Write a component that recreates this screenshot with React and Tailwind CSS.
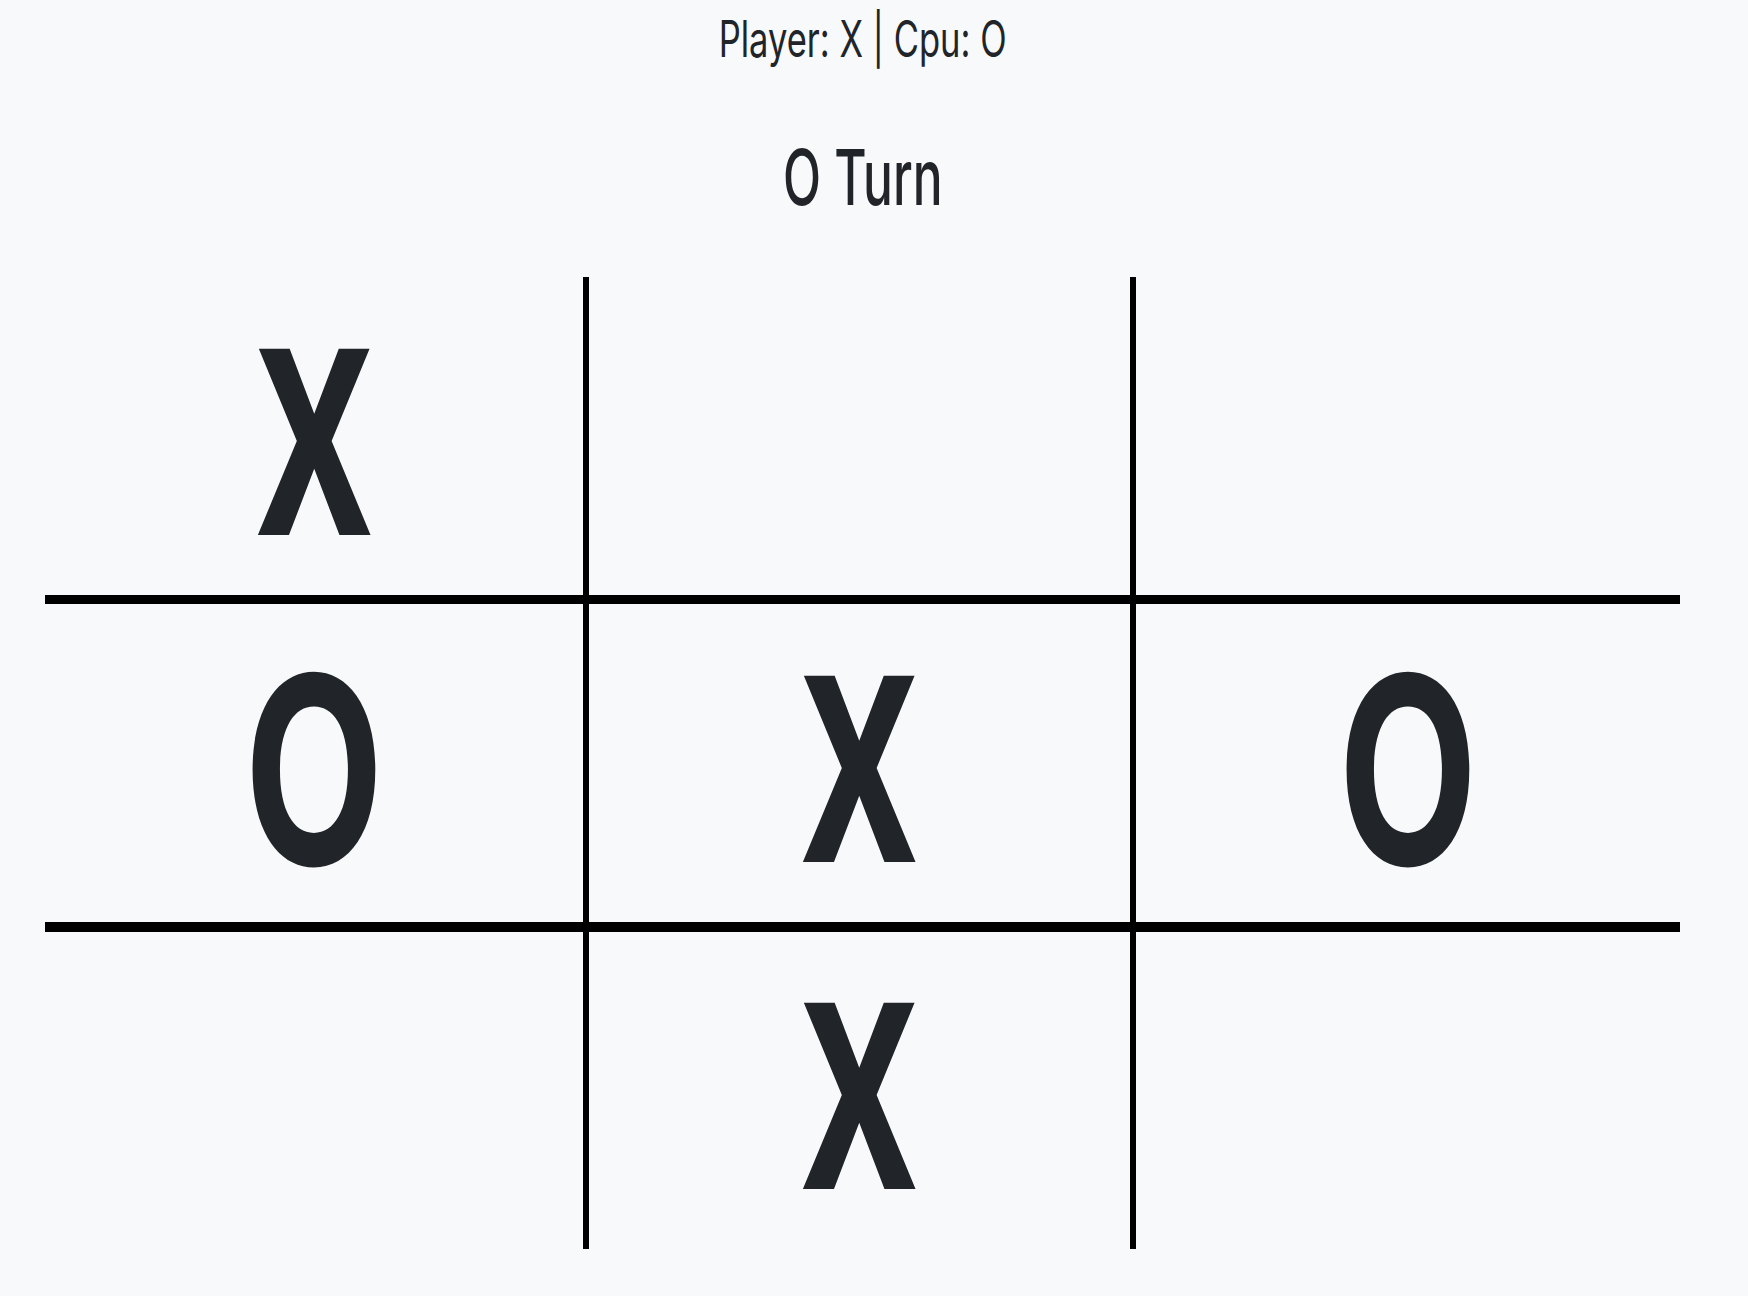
import React from 'react';

const board = ['X', '', '', 'O', 'X', 'O', '', 'X', ''];

// border classes per cell: middle column carries the vertical lines, middle row the horizontal ones
const cellBorders = [
  '',
  'border-x-[6px] border-black',
  '',
  'border-t-[9px] border-b-[10px] border-black',
  'border-x-[6px] border-t-[9px] border-b-[10px] border-black',
  'border-t-[9px] border-b-[10px] border-black',
  '',
  'border-x-[6px] border-black',
  '',
];

const Mark = ({ value }) => {
  if (value === 'X') {
    return (
      <span className="inline-block scale-x-[0.7] font-['Roboto',sans-serif] text-[262px] leading-none font-bold text-[#212529]">
        X
      </span>
    );
  }
  return (
    <span className="inline-block -translate-y-[3px] scale-x-[0.69] text-[262px] leading-none font-bold text-[#212529]">
      O
    </span>
  );
};

const Cell = ({ value, border }) => (
  <div className={`flex items-center justify-center pt-[19px] ${border}`}>
    {value && <Mark value={value} />}
  </div>
);

export default function App() {
  return (
    <div className="min-h-[1296px] w-full bg-[#f8f9fa] font-['Inter','Liberation_Sans',sans-serif]">
      <div className="w-[1725px] pt-[14px]">
        {/* Header */}
        <div className="flex justify-center">
          <span className="inline-block scale-x-[0.69] text-[50px] leading-none text-[#212529]">
            Player: X | Cpu: O
          </span>
        </div>
        <div className="mt-[75px] flex justify-center">
          <span className="inline-block scale-x-[0.645] text-[77px] leading-none font-medium text-[#212529]">
            O Turn
          </span>
        </div>

        {/* Board */}
        <div className="mt-[61px] ml-[45px] grid w-[1635px] grid-cols-[538px_553px_544px] grid-rows-[318px_337px_317px]">
          {board.map((value, i) => (
            <Cell key={i} value={value} border={cellBorders[i]} />
          ))}
        </div>
      </div>
    </div>
  );
}
